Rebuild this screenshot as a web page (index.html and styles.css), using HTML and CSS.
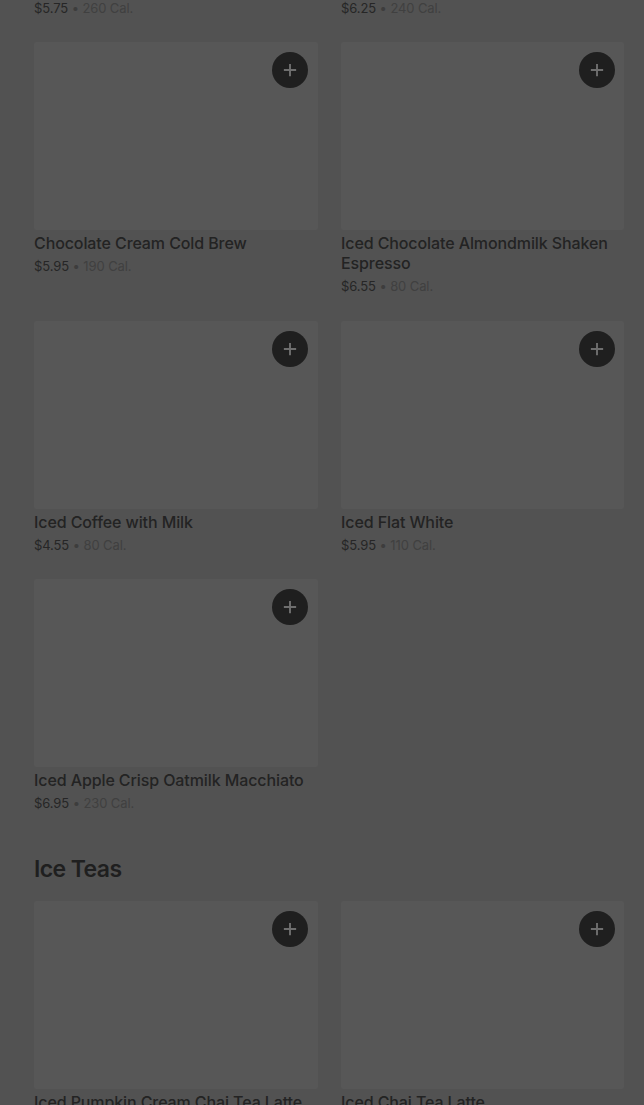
FILE: index.html
```html
<!DOCTYPE html>
<html lang="en">
<head>
<meta charset="utf-8">
<title>Menu</title>
<link rel="stylesheet" href="styles.css">
</head>
<body>
<main class="page">
  <section class="section">
    <div class="grid">
      <article class="card">
        <div class="thumb"><button class="add" aria-label="Add"><svg viewBox="0 0 16 16" width="14" height="14"><path d="M8 1v14M1 8h14" stroke="currentColor" stroke-width="2.2" fill="none"/></svg></button></div>
        <h3 class="name">Cold Brew</h3>
        <p class="meta"><span class="price">$5.75</span> • <span class="cal">260 Cal.</span></p>
      </article>
      <article class="card">
        <div class="thumb"><button class="add" aria-label="Add"><svg viewBox="0 0 16 16" width="14" height="14"><path d="M8 1v14M1 8h14" stroke="currentColor" stroke-width="2.2" fill="none"/></svg></button></div>
        <h3 class="name">Iced Caramel Macchiato</h3>
        <p class="meta"><span class="price">$6.25</span> • <span class="cal">240 Cal.</span></p>
      </article>
      <article class="card">
        <div class="thumb"><button class="add" aria-label="Add"><svg viewBox="0 0 16 16" width="14" height="14"><path d="M8 1v14M1 8h14" stroke="currentColor" stroke-width="2.2" fill="none"/></svg></button></div>
        <h3 class="name">Chocolate Cream Cold Brew</h3>
        <p class="meta"><span class="price">$5.95</span> • <span class="cal">190 Cal.</span></p>
      </article>
      <article class="card card-tall">
        <div class="thumb"><button class="add" aria-label="Add"><svg viewBox="0 0 16 16" width="14" height="14"><path d="M8 1v14M1 8h14" stroke="currentColor" stroke-width="2.2" fill="none"/></svg></button></div>
        <h3 class="name">Iced Chocolate Almondmilk Shaken Espresso</h3>
        <p class="meta"><span class="price">$6.55</span> • <span class="cal">80 Cal.</span></p>
      </article>
      <article class="card">
        <div class="thumb"><button class="add" aria-label="Add"><svg viewBox="0 0 16 16" width="14" height="14"><path d="M8 1v14M1 8h14" stroke="currentColor" stroke-width="2.2" fill="none"/></svg></button></div>
        <h3 class="name">Iced Coffee with Milk</h3>
        <p class="meta"><span class="price">$4.55</span> • <span class="cal">80 Cal.</span></p>
      </article>
      <article class="card">
        <div class="thumb"><button class="add" aria-label="Add"><svg viewBox="0 0 16 16" width="14" height="14"><path d="M8 1v14M1 8h14" stroke="currentColor" stroke-width="2.2" fill="none"/></svg></button></div>
        <h3 class="name">Iced Flat White</h3>
        <p class="meta"><span class="price">$5.95</span> • <span class="cal">110 Cal.</span></p>
      </article>
      <article class="card">
        <div class="thumb"><button class="add" aria-label="Add"><svg viewBox="0 0 16 16" width="14" height="14"><path d="M8 1v14M1 8h14" stroke="currentColor" stroke-width="2.2" fill="none"/></svg></button></div>
        <h3 class="name">Iced Apple Crisp Oatmilk Macchiato</h3>
        <p class="meta"><span class="price">$6.95</span> • <span class="cal">230 Cal.</span></p>
      </article>
    </div>
  </section>
  <section class="section">
    <h2 class="heading">Ice Teas</h2>
    <div class="grid">
      <article class="card">
        <div class="thumb"><button class="add" aria-label="Add"><svg viewBox="0 0 16 16" width="14" height="14"><path d="M8 1v14M1 8h14" stroke="currentColor" stroke-width="2.2" fill="none"/></svg></button></div>
        <h3 class="name">Iced Pumpkin Cream Chai Tea Latte</h3>
        <p class="meta"><span class="price">$6.45</span> • <span class="cal">310 Cal.</span></p>
      </article>
      <article class="card">
        <div class="thumb"><button class="add" aria-label="Add"><svg viewBox="0 0 16 16" width="14" height="14"><path d="M8 1v14M1 8h14" stroke="currentColor" stroke-width="2.2" fill="none"/></svg></button></div>
        <h3 class="name">Iced Chai Tea Latte</h3>
        <p class="meta"><span class="price">$5.45</span> • <span class="cal">240 Cal.</span></p>
      </article>
    </div>
  </section>
</main>
</body>
</html>
```
FILE: styles.css
```css
html, body {
  margin: 0;
  padding: 0;
  background: #525252;
  height: 100%;
  overflow: hidden;
}
body {
  font-family: Inter, "Noto Sans", "Liberation Sans", sans-serif;
  color: #222;
}
.page {
  padding: 0 20px 0 34px;
  margin-top: -216px;
}
.section + .section {
  margin-top: 40px;
}
.heading {
  margin: 0 0 16px;
  font-size: 23px;
  line-height: 32px;
  font-weight: 600;
  color: #1f1f1f;
  letter-spacing: -0.6px;
}
.grid {
  display: grid;
  grid-template-columns: 284px 283px;
  column-gap: 23px;
  row-gap: 24px;
  align-items: start;
}
.card {
  display: flex;
  flex-direction: column;
}
.card-tall {
  padding-bottom: 1px;
}
.thumb {
  position: relative;
  height: 188px;
  background: #575757;
  border-radius: 2px;
}
.add {
  position: absolute;
  top: 10px;
  right: 10px;
  width: 36px;
  height: 36px;
  border-radius: 50%;
  border: none;
  padding: 0;
  background: #1f1f1f;
  color: #6e6e6e;
  display: flex;
  align-items: center;
  justify-content: center;
}
.grid .card:nth-child(even) .add {
  right: 9px;
}
.name {
  margin: 3px 0 0;
  font-size: 16px;
  line-height: 20px;
  font-weight: 500;
  color: #232323;
  letter-spacing: -0.1px;
}
.meta {
  margin: 3px 0 0;
  font-size: 13px;
  line-height: 20px;
  color: #3d3d3d;
  letter-spacing: -0.1px;
}
.price {
  color: #262626;
}
.cal {
  color: #404040;
}
```
